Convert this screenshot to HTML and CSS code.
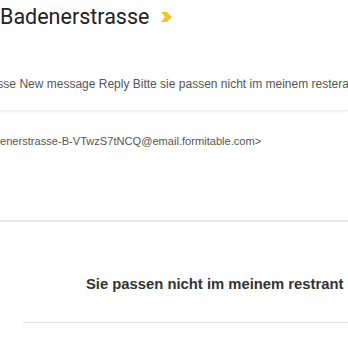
FILE: index.html
```html
<!DOCTYPE html>
<html>
<head>
<meta charset="utf-8">
<link rel="stylesheet" href="styles.css">
</head>
<body>
<div class="page">
  <div class="subject-row">
    <h1 class="subject">Badenerstrasse</h1>
    <svg class="marker" width="11" height="10" viewBox="0 0 11 10"><path d="M0 0 H6 L11 5 L6 10 H0 L4 5 Z" fill="#f4c430"/></svg>
  </div>
  <div class="snippet-row">
    <p class="snippet">Badenerstrasse New message Reply Bitte sie passen nicht im meinem resterant</p>
  </div>
  <div class="sender-row">
    <p class="sender">Badenerstrasse &lt;Badenerstrasse-B-VTwzS7tNCQ@email.formitable.com&gt;</p>
  </div>
  <div class="body">
    <h2 class="headline">Sie passen nicht im meinem restrant</h2>
    <div class="rule"></div>
  </div>
</div>
</body>
</html>
```
FILE: styles.css
```css
html, body {
  margin: 0;
  padding: 0;
  background: #fff;
}
body {
  width: 348px;
  height: 348px;
  overflow: hidden;
}
.page {
  width: 348px;
  overflow: hidden;
}
.subject-row {
  display: flex;
  align-items: center;
  height: 34px;
}
.subject {
  margin: 0;
  font-family: Roboto, "Liberation Sans", sans-serif;
  font-weight: 400;
  font-size: 21.5px;
  color: #222;
  line-height: 34px;
}
.marker {
  margin-left: 12px;
}
.snippet-row {
  height: 111px;
  margin-top: -34px;
  padding-top: 34px;
  border-bottom: 1px solid #eee;
  box-shadow: 0 1px 2px rgba(0,0,0,0.06);
  box-sizing: border-box;
  display: flex;
  align-items: flex-start;
}
.snippet {
  margin: 43px 0 0 -68px;
  white-space: nowrap;
  font-family: "Liberation Sans", Arial, sans-serif;
  font-size: 12px;
  color: #555;
  line-height: 14px;
}
.sender-row {
  height: 111px;
  padding-top: 23px;
  border-bottom: 2px solid #e8e8e8;
  box-sizing: border-box;
}
.sender {
  margin: 0 0 0 -107px;
  white-space: nowrap;
  font-family: "Liberation Sans", Arial, sans-serif;
  font-size: 11.1px;
  color: #555;
  line-height: 14px;
}
.body {
  padding-left: 23px;
  padding-top: 52px;
}
.headline {
  margin: 0 0 0 63px;
  font-family: "Liberation Sans", Arial, sans-serif;
  font-weight: 700;
  font-size: 14.8px;
  color: #333;
  line-height: 20px;
  white-space: nowrap;
}
.rule {
  margin-top: 28px;
  height: 1px;
  background: #e3e3e3;
}
```
